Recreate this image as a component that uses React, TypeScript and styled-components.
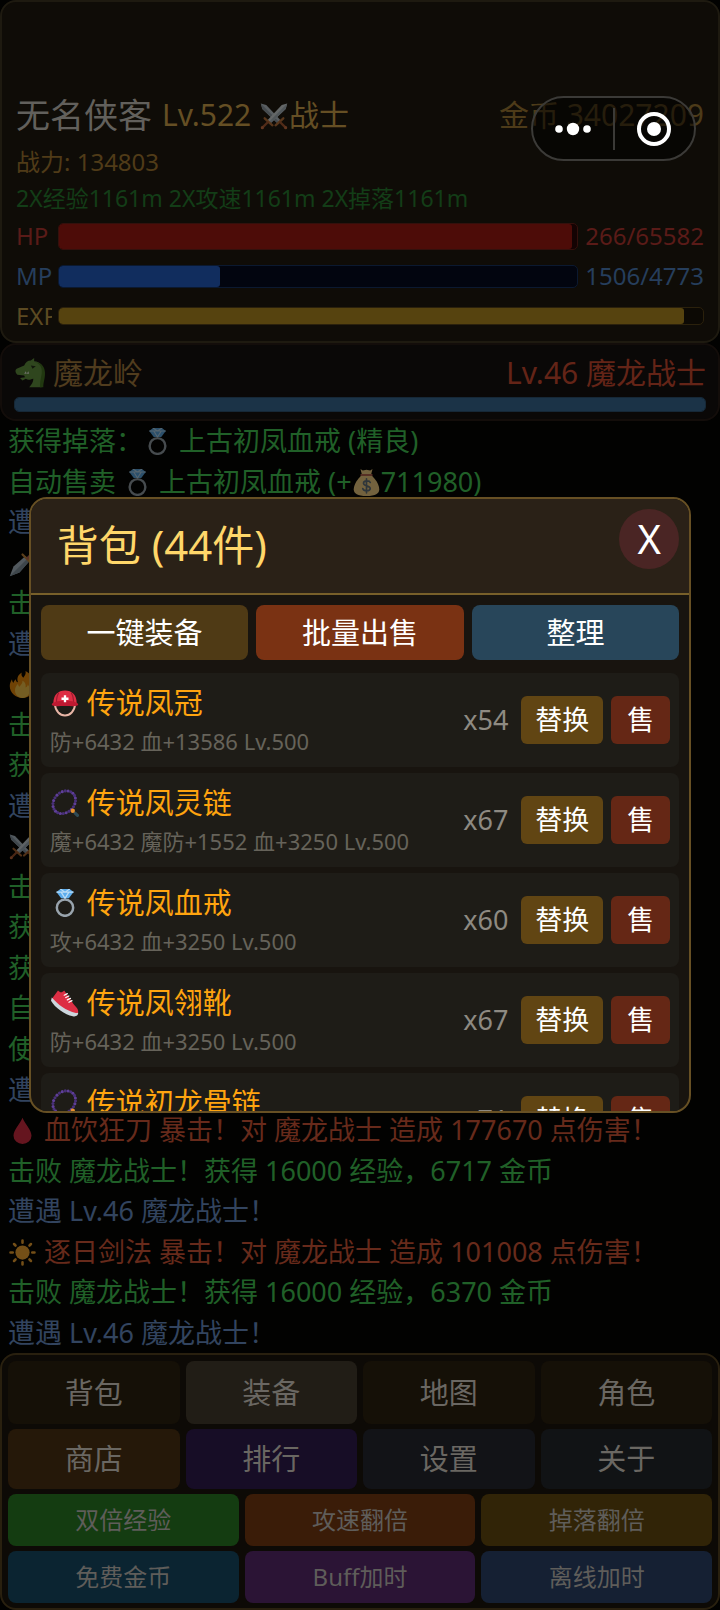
import React from 'react';
import styled, { createGlobalStyle } from 'styled-components';

const GlobalStyle = createGlobalStyle`
  *, *::before, *::after { box-sizing: border-box; }
  body { margin: 0; background: #020201; }
  body, button {
    font-family: 'Noto Sans', 'Noto Sans CJK SC', sans-serif;
    font-weight: 400;
  }
  button { border: 0; padding: 0; margin: 0; cursor: pointer; }
  h1, h2, h3, p, ul { margin: 0; padding: 0; font-weight: 400; }
  ul { list-style: none; }
`;

/* ---------- icons ---------- */

type IconName =
  | 'swords' | 'dagger' | 'fire' | 'ring' | 'bag' | 'drop' | 'sun' | 'dragon'
  | 'helmet' | 'beads' | 'shoe';

const IconSvg = styled.svg<{ $size: number; $dim?: boolean }>`
  display: inline-block;
  flex: none;
  width: ${(p) => p.$size}px;
  height: ${(p) => p.$size}px;
  margin: 0 1px;
  vertical-align: -4px;
  opacity: ${(p) => (p.$dim ? 0.45 : 1)};
`;

const BEADS = Array.from({ length: 24 }, (_, i) => {
  const a = (i / 24) * Math.PI * 2;
  const x = 16 * Math.cos(a);
  const y = 13 * Math.sin(a);
  const t = -0.8;
  return {
    x: 17 + x * Math.cos(t) - y * Math.sin(t),
    y: 17 + x * Math.sin(t) + y * Math.cos(t),
  };
});

const SHAPES: Record<IconName, React.ReactNode> = {
  swords: (
    <>
      <path d="M1 2l7 2 19 20-4 4L3 9z" fill="#b4c3cf" />
      <path d="M1 2l24 24-2 2L3 9z" fill="#8899a6" />
      <path d="M35 2l-7 2L9 24l4 4L33 9z" fill="#ccd6dd" />
      <path d="M35 2L11 26l2 2L33 9z" fill="#9fb0bd" />
      <path d="M20 30l10-9M16 30L6 21" stroke="#b06a35" strokeWidth="3" strokeLinecap="round" />
      <path d="M26 26l7 7M10 26l-7 7" stroke="#a0522d" strokeWidth="3" strokeLinecap="round" />
      <circle cx="33" cy="33" r="2" fill="#c4683c" />
      <circle cx="3" cy="33" r="2" fill="#c4683c" />
    </>
  ),
  dagger: (
    <>
      <path d="M1 35l5-13L22 8l6 6-14 16z" fill="#b4c3cf" />
      <path d="M1 35L25 11l3 3-14 16z" fill="#8899a6" />
      <path d="M18 6l12 12" stroke="#c98a3c" strokeWidth="3" strokeLinecap="round" />
      <path d="M25 11l8-8" stroke="#c1694f" strokeWidth="4" strokeLinecap="round" />
    </>
  ),
  fire: (
    <>
      <path d="M35 19c0-3-1-5-2-7-1 2-2 3-4 3 3-6-1-12-7-15 1 4-1 6-3 9-2-2-3-4-2-7-5 3-7 8-5 13-2 0-3-2-3-4-2 2-3 3-3 5 -1-1-2-3-2-5-2 3-3 6-3 9 0 9 8 16 17 16s17-8 17-17z" fill="#f4900c" />
      <path d="M28 24c0-3-2-4-3-6 0 2-1 3-3 4 1-4-1-8-4-9 0 4-2 5-4 8-1-1-2-2-2-4-3 3-4 6-4 9 0 5 4 10 10 10s10-5 10-12z" fill="#ffcc4d" />
    </>
  ),
  ring: (
    <>
      <circle cx="18" cy="24" r="10.5" fill="none" stroke="#99a4ad" strokeWidth="3.200" />
      <path d="M12 0h12l5 4-6 8H13L7 4z" fill="#5dadec" />
      <path d="M12 0l6 4 6-4M7 4h22M18 12l-5-8M18 12l5-8" stroke="#bdddf4" strokeWidth="1.500" fill="none" />
    </>
  ),
  bag: (
    <>
      <path d="M12 8h12c6 5 11 13 11 19 0 6-5 9-17 9S1 33 1 27C1 21 6 13 12 8z" fill="#fdd888" />
      <path d="M10 0l3 2 5-1 5 1 3-2-2 8H12z" fill="#fdd888" />
      <path d="M11 8h14" stroke="#bf6952" strokeWidth="2.500" strokeLinecap="round" />
      <path d="M23 18c-1-3-9-3-9 1s9 3 9 7-9 4-10 0M18 13v19" fill="none" stroke="#67757f" strokeWidth="2.200" strokeLinecap="round" />
    </>
  ),
  drop: <path d="M18 1c3 8 12 16 12 24a12 11 0 0 1-24 0C6 17 15 9 18 1z" fill="#dd2e44" />,
  sun: (
    <>
      <circle cx="18" cy="18" r="9.500" fill="#ffac33" />
      <path d="M18 2v3M18 31v3M2 18h3M31 18h3M6.700 6.700l2 2M27.300 27.300l2 2M6.700 29.300l2-2M27.300 8.700l2-2" stroke="#ffac33" strokeWidth="3.400" strokeLinecap="round" />
    </>
  ),
  dragon: (
    <>
      <path d="M19 3l4-3v4c7 0 12 6 12 14 0 8-3 10-3 17H17c3-3 5-6 5-10-4 1-6 2-9 0l-4 2-3-3 6-1-1-2-8-1c-3-2-3-6-1-7l9-4c2-4 4-6 8-6z" fill="#5c913b" />
      <path d="M24 5c7 2 9 8 8 14-1 6-2 9-2 16h4c0-7 2-9 2-17 0-8-5-13-12-13z" fill="#3e721d" />
      <path d="M19 9l6 1-4 3z" fill="#1c2b12" />
      <path d="M11 19l2-3 1 3 2-3 1 3" fill="#e8f0e0" />
    </>
  ),
  helmet: (
    <>
      <path d="M5 19c1 20 25 20 26 0" fill="none" stroke="#e8b5a6" strokeWidth="2.500" />
      <path d="M3 18C3 8 9 2 18 2s15 6 15 16z" fill="#dd2e44" />
      <path d="M10 5C7 9 7 13 7 18M26 5c3 4 3 8 3 13" stroke="#a01c30" strokeWidth="1.500" fill="none" />
      <path d="M1 20c0-3 8-5 17-5s17 2 17 5c0 3-8 2-17 2S1 23 1 20z" fill="#be1931" />
      <path d="M18 8v9M13.500 12.500h9" stroke="#fff" strokeWidth="3" />
    </>
  ),
  beads: (
    <>
      {BEADS.map((b, i) => (
        <circle key={i} cx={b.x} cy={b.y} r="2" fill={i % 2 ? '#49307a' : '#5f3f98'} />
      ))}
      <path d="M31 31l3 3" stroke="#2f4a55" strokeWidth="4" strokeLinecap="round" />
      <circle cx="28" cy="28" r="2.800" fill="#e8912d" />
    </>
  ),
  shoe: (
    <>
      <path d="M1 13L9 2c3 3 5 3 8 0l11 16c2 4 7 6 7 11 0 3-2 5-5 4C20 29 8 22 1 13z" fill="#dd2e44" />
      <path d="M1 11c8 9 18 17 31 20 2 0 3-1 3 0 0 3-3 5-7 4C18 33 5 24 0 15z" fill="#ccd6dd" />
      <path d="M17 8l4-2M19 11l4-2M21 14l4-2M23 17l4-2" stroke="#fff" strokeWidth="1.600" strokeLinecap="round" />
    </>
  ),
};

const Icon = ({ name, size = 27, dim }: { name: IconName; size?: number; dim?: boolean }) => (
  <IconSvg viewBox="0 0 36 36" fill="none" aria-hidden="true" $size={size} $dim={dim}>
    {SHAPES[name]}
  </IconSvg>
);

/* ---------- page ---------- */

const Page = styled.div`
  position: relative;
  display: flex;
  flex-direction: column;
  min-height: 100vh;
  background: #020201;
  overflow: hidden;
`;

const StatusPanel = styled.header`
  display: flex;
  flex-direction: column;
  padding: 84px 14px 5px;
  border: 2px solid #1e1a10;
  border-radius: 16px;
  background: #0f0c07;
`;

const Spread = styled.div<{ $height: number }>`
  display: flex;
  align-items: center;
  justify-content: space-between;
  height: ${(p) => p.$height}px;
  white-space: nowrap;
`;

const Identity = styled.div`
  display: flex;
  align-items: center;
  gap: 10px;
`;

const PlayerName = styled.h1`
  font-size: 34px;
  line-height: 44px;
  color: #62605c;
`;

const Label = styled.span<{ $color: string }>`
  font-size: 30px;
  line-height: 40px;
  color: ${(p) => p.$color};
`;

const StatLine = styled.p<{ $color: string; $size: number }>`
  font-size: ${(p) => p.$size}px;
  line-height: 36px;
  color: ${(p) => p.$color};
  white-space: nowrap;
`;

const GaugeRow = styled.div<{ $color: string }>`
  display: flex;
  align-items: center;
  gap: 6px;
  height: 40px;
  font-size: 24px;
  line-height: 36px;
  color: ${(p) => p.$color};
`;

const GaugeLabel = styled.span`
  flex: none;
  width: 36px;
  overflow: hidden;
`;

const GaugeValue = styled.span`
  display: flex;
  justify-content: flex-end;
  flex: none;
  width: 120px;
  overflow: hidden;
`;

const Track = styled.div<{ $height: number; $bg: string; $line: string }>`
  flex: 1;
  height: ${(p) => p.$height}px;
  border: 1px solid ${(p) => p.$line};
  border-radius: 5px;
  background: ${(p) => p.$bg};
  overflow: hidden;
`;

const Fill = styled.div<{ $color: string }>`
  height: 100%;
  border-radius: 3px;
  background: ${(p) => p.$color};
`;

const ZonePanel = styled.section`
  display: flex;
  flex-direction: column;
  gap: 4px;
  padding: 8px 12px 7px;
  border: 2px solid #130d0a;
  border-radius: 16px;
  background: #0a0807;
`;

const ZoneTrack = styled.div`
  display: flex;
  height: 15px;
`;

const ZoneName = styled.span`
  display: flex;
  align-items: center;
  gap: 7px;
`;

const Log = styled.ul`
  display: flex;
  flex: 1;
  flex-direction: column;
  justify-content: space-between;
  padding: 0 8px;
`;

const LogLine = styled.li<{ $tone: Tone }>`
  font-size: 27px;
  line-height: 40px;
  height: 40px;
  white-space: nowrap;
  color: ${(p) => TONES[p.$tone]};
`;

const Nav = styled.nav`
  display: flex;
  flex-direction: column;
  gap: 5px;
  padding: 6px 6px 5px;
  border: 2px solid #29200f;
  border-radius: 16px;
  background: #0d0a06;
`;

const NavRow = styled.div`
  display: flex;
  gap: 6px;
`;

const NavButton = styled.button<{ $bg: string; $height: number; $small?: boolean }>`
  flex: 1 1 0;
  height: ${(p) => p.$height}px;
  border-radius: 8px;
  background: ${(p) => p.$bg};
  color: ${(p) => (p.$small ? '#5f5d5a' : '#6a6762')};
  font-size: ${(p) => (p.$small ? 24 : 29)}px;
  line-height: 40px;
`;

/* ---------- capsule ---------- */

const Capsule = styled.div`
  position: absolute;
  top: 96px;
  right: 24px;
  display: flex;
  align-items: center;
  width: 165px;
  height: 65px;
  border: 2px solid #3b3a37;
  border-radius: 33px;
  background: rgba(0, 0, 0, 0.5);
`;

const CapsuleButton = styled.button`
  display: flex;
  flex: 1;
  align-items: center;
  justify-content: center;
  height: 100%;
  background: none;
`;

const CapsuleDivider = styled.span`
  width: 2px;
  height: 42px;
  background: #3b3a37;
`;

/* ---------- backpack dialog ---------- */

const Overlay = styled.div`
  position: absolute;
  inset: 0;
  display: flex;
  align-items: center;
  justify-content: center;
`;

const Dialog = styled.section`
  display: flex;
  flex-direction: column;
  width: 92%;
  height: 616px;
  border: 2px solid #675024;
  border-radius: 18px;
  background: #18140f;
  overflow: hidden;
`;

const DialogHead = styled.div`
  display: flex;
  flex: none;
  align-items: flex-start;
  justify-content: space-between;
  height: 96px;
  padding: 10px 10px 0 26px;
  border-bottom: 2px solid #78602a;
  background: #2a2117;
`;

const DialogTitle = styled.h2`
  padding-top: 8px;
  font-size: 42px;
  line-height: 56px;
  color: #ffd76a;
`;

const CloseButton = styled.button`
  width: 60px;
  height: 60px;
  border-radius: 50%;
  background: #4a2524;
  color: #fff;
  font-size: 40px;
  line-height: 56px;
`;

const DialogBody = styled.div`
  display: flex;
  flex: 1;
  flex-direction: column;
  gap: 13px;
  min-height: 0;
  padding: 10px 10px 0;
`;

const Actions = styled.div`
  display: flex;
  flex: none;
  gap: 8px;
`;

const ActionButton = styled.button<{ $bg: string }>`
  flex: 1 1 0;
  height: 55px;
  border-radius: 8px;
  background: ${(p) => p.$bg};
  color: #fff;
  font-size: 29px;
  line-height: 40px;
`;

const Items = styled.ul`
  display: flex;
  flex: 1;
  flex-direction: column;
  gap: 6px;
  min-height: 0;
  overflow: hidden;
`;

const Item = styled.li`
  display: flex;
  flex: none;
  align-items: center;
  gap: 8px;
  height: 94px;
  padding: 0 9px;
  border-radius: 8px;
  background: #1e1c17;
`;

const ItemInfo = styled.div`
  flex: 1;
  min-width: 0;
  white-space: nowrap;
`;

const ItemName = styled.h3`
  display: flex;
  align-items: center;
  gap: 7px;
  font-size: 29px;
  line-height: 42px;
  color: #ffa40f;
`;

const ItemStats = styled.p`
  font-size: 22px;
  line-height: 34px;
  color: #66635a;
`;

const Quantity = styled.span`
  flex: none;
  width: 50px;
  font-size: 27px;
  line-height: 40px;
  color: #8e8a82;
`;

const ItemButton = styled.button<{ $bg: string; $width: number }>`
  flex: none;
  width: ${(p) => p.$width}px;
  height: 48px;
  border-radius: 6px;
  background: ${(p) => p.$bg};
  color: #fff;
  font-size: 27px;
  line-height: 40px;
`;

/* ---------- data ---------- */

type Tone = 'gain' | 'meet' | 'crit';

const TONES: Record<Tone, string> = {
  gain: '#206028',
  meet: '#32445f',
  crit: '#672a1b',
};

type LogEntry = { tone: Tone; text: React.ReactNode };

const meet: LogEntry = { tone: 'meet', text: '遭遇 Lv.46 魔龙战士！' };

const crit = (icon: IconName, skill: string, damage: number): LogEntry => ({
  tone: 'crit',
  text: <><Icon name={icon} dim /> {skill} 暴击！对 魔龙战士 造成 {damage} 点伤害！</>,
});

const defeat = (exp: number, gold: number): LogEntry => ({
  tone: 'gain',
  text: `击败 魔龙战士！获得 ${exp} 经验，${gold} 金币`,
});

const brief = (tone: Tone, text: string): LogEntry => ({ tone, text });

const skill = (icon: IconName): LogEntry => ({ tone: 'crit', text: <Icon name={icon} dim /> });

const LOG: LogEntry[] = [
  {
    tone: 'gain',
    text: <>获得掉落：<Icon name="ring" dim /> 上古初凤血戒 (精良)</>,
  },
  {
    tone: 'gain',
    text: <>自动售卖 <Icon name="ring" dim /> 上古初凤血戒 (+<Icon name="bag" dim />711980)</>,
  },
  brief('meet', '遭'),
  skill('dagger'),
  brief('gain', '击'),
  brief('meet', '遭'),
  skill('fire'),
  brief('gain', '击'),
  brief('gain', '获'),
  brief('meet', '遭'),
  skill('swords'),
  brief('gain', '击'),
  brief('gain', '获'),
  brief('gain', '获'),
  brief('gain', '自'),
  brief('gain', '使'),
  brief('meet', '遭'),
  crit('drop', '血饮狂刀', 177670),
  defeat(16000, 6717),
  meet,
  crit('sun', '逐日剑法', 101008),
  defeat(16000, 6370),
  meet,
];

const ITEMS: { icon: IconName; name: string; stats: string; count: number }[] = [
  { icon: 'helmet', name: '传说凤冠', stats: '防+6432 血+13586 Lv.500', count: 54 },
  { icon: 'beads', name: '传说凤灵链', stats: '魔+6432 魔防+1552 血+3250 Lv.500', count: 67 },
  { icon: 'ring', name: '传说凤血戒', stats: '攻+6432 血+3250 Lv.500', count: 60 },
  { icon: 'shoe', name: '传说凤翎靴', stats: '防+6432 血+3250 Lv.500', count: 67 },
  { icon: 'beads', name: '传说初龙骨链', stats: '', count: 71 },
];

const NAV: { height: number; small?: boolean; buttons: [string, string][] }[] = [
  { height: 63, buttons: [['背包', '#151007'], ['装备', '#211d16'], ['地图', '#151007'], ['角色', '#151007']] },
  { height: 60, buttons: [['商店', '#251809'], ['排行', '#170d26'], ['设置', '#121317'], ['关于', '#111315']] },
  { height: 52, small: true, buttons: [['双倍经验', '#143c11'], ['攻速翻倍', '#3a1c08'], ['掉落翻倍', '#312407']] },
  { height: 52, small: true, buttons: [['免费金币', '#0b2431'], ['Buff加时', '#2b1435'], ['离线加时', '#152033']] },
];

export default function App() {
  return (
    <Page>
      <GlobalStyle />
      <StatusPanel>
        <Spread $height={58}>
          <Identity>
            <PlayerName>无名侠客</PlayerName>
            <Label $color="#654f24">
              Lv.522 <Icon name="swords" size={28} dim />战士
            </Label>
          </Identity>
          <Label $color="#4d3b19">金币 34027209</Label>
        </Spread>
        <StatLine $color="#503b18" $size={24}>战力: 134803</StatLine>
        <StatLine $color="#133d17" $size={23}>2X经验1161m 2X攻速1161m 2X掉落1161m</StatLine>
        <GaugeRow $color="#5a1b18">
          <GaugeLabel>HP</GaugeLabel>
          <Track $height={27} $bg="#140303" $line="#34100c">
            <Fill $color="#4d0c08" style={{ width: '99%' }} />
          </Track>
          <GaugeValue>266/65582</GaugeValue>
        </GaugeRow>
        <GaugeRow $color="#263e5c">
          <GaugeLabel>MP</GaugeLabel>
          <Track $height={23} $bg="#02050f" $line="#0b1930">
            <Fill $color="#112d5e" style={{ width: '31%' }} />
          </Track>
          <GaugeValue>1506/4773</GaugeValue>
        </GaugeRow>
        <GaugeRow $color="#5c4a22">
          <GaugeLabel>EXP</GaugeLabel>
          <Track $height={18} $bg="#0c0904" $line="#2b210c">
            <Fill $color="#56430f" style={{ width: '97%' }} />
          </Track>
        </GaugeRow>
      </StatusPanel>

      <ZonePanel>
        <Spread $height={40}>
          <ZoneName>
            <Icon name="dragon" size={30} dim />
            <Label $color="#503c1e">魔龙岭</Label>
          </ZoneName>
          <Label $color="#642417">Lv.46 魔龙战士</Label>
        </Spread>
        <ZoneTrack>
          <Track $height={15} $bg="#0a1118" $line="#162837">
            <Fill $color="#1b3347" style={{ width: '100%' }} />
          </Track>
        </ZoneTrack>
      </ZonePanel>

      <Log>
        {LOG.map((entry, i) => (
          <LogLine key={i} $tone={entry.tone}>{entry.text}</LogLine>
        ))}
      </Log>

      <Nav>
        {NAV.map((row, i) => (
          <NavRow key={i}>
            {row.buttons.map(([label, bg]) => (
              <NavButton key={label} type="button" $bg={bg} $height={row.height} $small={row.small}>
                {label}
              </NavButton>
            ))}
          </NavRow>
        ))}
      </Nav>

      <Overlay>
        <Dialog role="dialog" aria-labelledby="backpack-title">
          <DialogHead>
            <DialogTitle id="backpack-title">背包 (44件)</DialogTitle>
            <CloseButton type="button">X</CloseButton>
          </DialogHead>
          <DialogBody>
            <Actions>
              <ActionButton type="button" $bg="#4f3a15">一键装备</ActionButton>
              <ActionButton type="button" $bg="#7a3213">批量出售</ActionButton>
              <ActionButton type="button" $bg="#28465a">整理</ActionButton>
            </Actions>
            <Items>
              {ITEMS.map((item) => (
                <Item key={item.name}>
                  <ItemInfo>
                    <ItemName>
                      <Icon name={item.icon} size={28} />
                      {item.name}
                    </ItemName>
                    <ItemStats>{item.stats || '\u00a0'}</ItemStats>
                  </ItemInfo>
                  <Quantity>x{item.count}</Quantity>
                  <ItemButton type="button" $bg="#614513" $width={82}>替换</ItemButton>
                  <ItemButton type="button" $bg="#652715" $width={59}>售</ItemButton>
                </Item>
              ))}
            </Items>
          </DialogBody>
        </Dialog>
      </Overlay>

      <Capsule>
        <CapsuleButton type="button" aria-label="更多">
          <svg width="36" height="16" viewBox="0 0 36 16" fill="#fff">
            <circle cx="4" cy="8" r="3.800" />
            <circle cx="18" cy="8" r="6.200" />
            <circle cx="32" cy="8" r="3.800" />
          </svg>
        </CapsuleButton>
        <CapsuleDivider />
        <CapsuleButton type="button" aria-label="关闭">
          <svg width="36" height="36" viewBox="0 0 36 36" fill="none">
            <circle cx="18" cy="18" r="15" stroke="#fff" strokeWidth="4" />
            <circle cx="18" cy="18" r="7" fill="#fff" />
          </svg>
        </CapsuleButton>
      </Capsule>
    </Page>
  );
}
